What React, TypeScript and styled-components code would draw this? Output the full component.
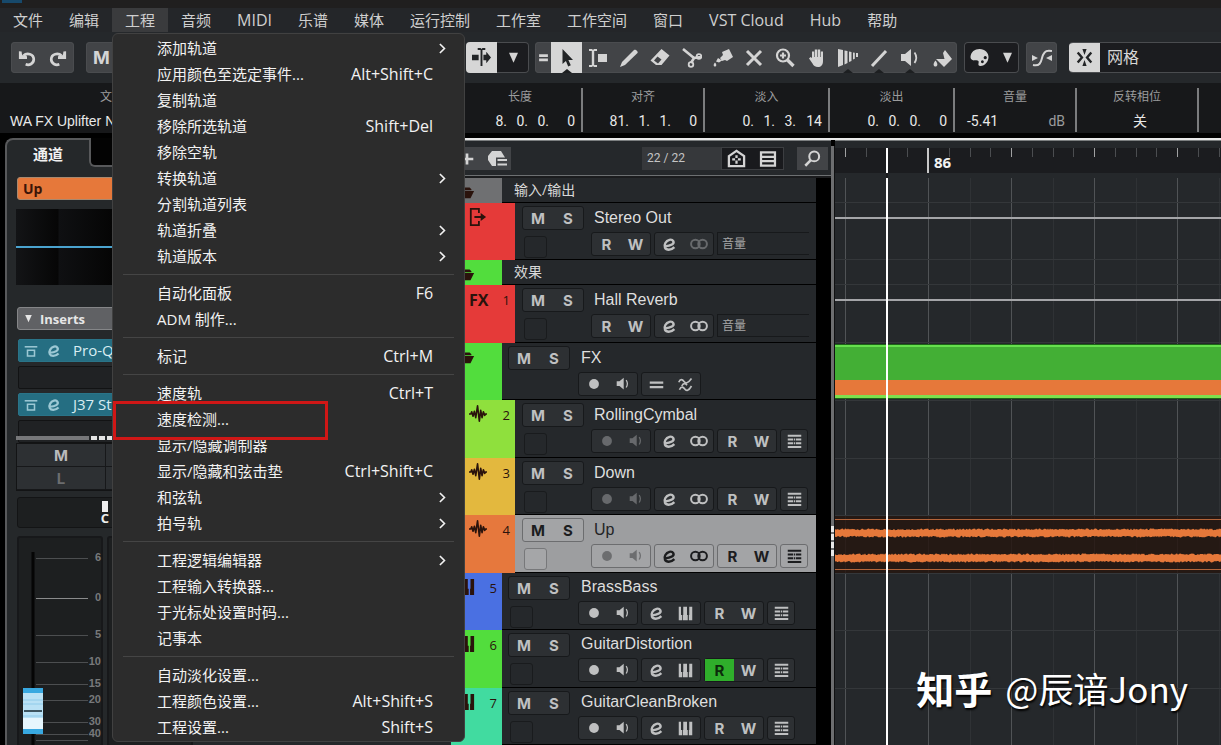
import React from 'react';
import styled, { createGlobalStyle, css } from 'styled-components';

const ui = `"Open Sans", "Noto Sans CJK SC", sans-serif`;
const plain = `"Liberation Sans", "Noto Sans CJK SC", sans-serif`;
const digits = `Roboto, "Noto Sans CJK SC", sans-serif`;

const Global = createGlobalStyle`
  *, *::before, *::after { box-sizing: border-box; }
  body { margin: 0; background: #000; color: #d6d6d6; font-family: ${ui}; overflow: hidden; }
  button { font: inherit; color: inherit; background: none; border: 0; padding: 0; margin: 0; }
  svg { display: block; flex: none; }
`;

/* ---------- icons ---------- */

const icons: Record<string, React.ReactNode> = {
  undo: <><path d="M6 7.500C10 3.500 17.500 5.500 17.500 11.500c0 5-5 7-9 5.500" fill="none" stroke="currentColor" strokeWidth="3" /><path d="M1 2.500l3 .3.500 4L10 8v3H1z" /></>,
  redo: <><path d="M14 7.500C10 3.500 2.500 5.500 2.500 11.500c0 5 5 7 9 5.500" fill="none" stroke="currentColor" strokeWidth="3" /><path d="M19 2.500l-3 .3-.500 4L10 8v3h9z" /></>,
  crosshair: <><path d="M0 7h7v6H0zM9 1h2v18H9zM6 0h3l1 1 1-1h3v2H6zM12 7h3V4l5 6-5 6v-3h-3z" /></>,
  down: <path d="M4 3.500h12L10 17z" />,
  equal: <path d="M2 4h16v5H2zM2 12h16v5H2z" />,
  bars: <path d="M1 6h18v3H1zM1 12h18v3H1z" />,
  cursor: <path d="M5.500 1v15l3.400-3 2.300 5.500 2.600-1.200-2.400-5.300h4.600z" />,
  range: <><path d="M1 1h3l1 1 1-1h3v2H6.200v14H9v2H6l-1-1-1 1H1v-2h2.800V3H1zM10 6h9v8h-9z" /></>,
  pencil: <path d="M1 19l2-5L15 2c1.500-1 4.500 1.500 3.500 3L6 17z" />,
  eraser: <path fillRule="evenodd" d="M11.500 1l8 6.500-8 9.500H6L.500 12.500zM7.500 8.500L4 12.500l4 3 3.500-4z" />,
  scissors: <><path d="M1 1l11 9M19 9l-7 1-3 5" fill="none" stroke="currentColor" strokeWidth="2.600" /><circle cx="17" cy="8.500" r="2.300" fill="none" stroke="currentColor" strokeWidth="1.800" /><circle cx="9" cy="16.500" r="2.300" fill="none" stroke="currentColor" strokeWidth="1.800" /></>,
  glue: <path d="M9 4l7-3 4 8-6 4-2-1-3 1-2-3 3-3zM5 10l4 2.500-3 2-3-1zM2 14.500c2 2 1.500 4 0 4s-2-2 0-4z" />,
  cross: <path d="M3 3l14 14M17 3L3 17" fill="none" stroke="currentColor" strokeWidth="3" />,
  zoom: <><circle cx="8" cy="7.500" r="6" fill="none" stroke="currentColor" strokeWidth="2.200" /><path d="M8 4.500v6M5 7.500h6" stroke="currentColor" strokeWidth="2.200" /><path d="M12.500 12l6 6" stroke="currentColor" strokeWidth="3.400" /></>,
  hand: <path d="M5 10V3.500h2.200V9h.6V1.500h2.400V9h.6V1.500h2.400V9h.6V3.500H16V13c0 4-2 6-5 6s-4.500-1.500-5.500-3.500L2 10.500l1.500-1.500z" />,
  comp: <path d="M0 1l5 1v15l-5 2zM6.500 2.500l3 .5v12l-3 1.500zM11 3.500l2.500.5v9l-2.500 1zM15 4.500l1.800.3v6l-1.800.7zM18 5h2v4h-2z" />,
  line: <path d="M3 18L17 3" stroke="currentColor" strokeWidth="3" />,
  speaker: <><path d="M1 6h4l6-5v17l-6-5H1z" /><path d="M14.500 4.500q3.500 5 0 10.500" fill="none" stroke="currentColor" strokeWidth="1.800" /></>,
  paint: <path d="M13 2l7 9-8 8-8-8h8.500l-1.500-6zM3.500 12.500c3 3.500 2 6 0 6s-3-2.500 0-6z" />,
  palette: <path fillRule="evenodd" d="M10 1c6 0 9.500 4 9.500 8.500S16 19 11 19c-2 0-2.500-1.500-2-3 .8-3-1-3.500-4-3C2 13.500.500 11.500.500 9.500 1 4 5 1 10 1zM16 8.500a1.700 1.700 0 1 0 .1 0zM13 13a1.500 1.500 0 1 0 .1 0z" />,
  curve: <><path d="M1 17c9 2 8-6 10-10s4-5 9-4" fill="none" stroke="currentColor" strokeWidth="2" /><path d="M0 7l6 3-6 3zM20 7l-6 3 6 3z" /></>,
  snap: <><path d="M7.500 0h5L10 7zM7.500 20h5L10 13z" /><path d="M2 4l5 6-5 6M18 4l-5 6 5 6" fill="none" stroke="currentColor" strokeWidth="2.800" /></>,
  plus: <path d="M8.500 4h3v4.500H17v3h-5.500V16h-3v-4.500H3v-3h5.500z" />,
  preset: <><path d="M5 2h9l4 6.500H9V17H5L1 11V7z" /><path d="M10.500 11H20M10.500 15.500H20" stroke="currentColor" strokeWidth="2.200" /></>,
  agents: <><path d="M2 7.500L10 2l8 5.500V18H2z" fill="none" stroke="currentColor" strokeWidth="2.400" /><path d="M10 6.500v3M10 12v3.500M5.500 11h3M11.500 11h3" stroke="currentColor" strokeWidth="2.400" /></>,
  list: <path fillRule="evenodd" d="M1 1.500h18v17H1zM3.500 4v2.500h13V4zM3.500 8.800v2.400h13V8.800zM3.500 13.500V16h13v-2.500z" />,
  search: <><circle cx="12" cy="7.500" r="5.800" fill="none" stroke="currentColor" strokeWidth="2.400" /><path d="M8 12l-6.500 6.500" stroke="currentColor" strokeWidth="3" /></>,
  folder: <path d="M1 5h13l2 2v1H1zM3 9h16l-4 8H1z" />,
  output: <><path d="M11 5.500V1H2v18h9v-4.500" fill="none" stroke="currentColor" strokeWidth="2" /><path d="M6 9h7V5.500l6 4.500-6 4.500V11H6z" /></>,
  wave: <path d="M0 10h2l1-2.500 1.500 5L6 7l1.500 7L9.500 1l2 17L13 6l1.500 8L16 7.500l1.500 4 1-1.500H20" fill="none" stroke="currentColor" strokeWidth="1.800" strokeLinejoin="round" />,
  keys: <path d="M1 1h3v11h1.500v7H1zM7 12V1h5v11h1v7H6.500v-7zM15 1h4v18h-4.500v-7H15z" />,
  rec: <circle cx="10" cy="10" r="7" />,
  edit: <path d="M4 12.500C12 12 17 9 15 5.500 13 2 7 3.500 4.500 8s-.5 9 4.500 9c3 0 5.500-1.500 7.500-3.500" fill="none" stroke="currentColor" strokeWidth="3.200" />,
  stereo: <><circle cx="6" cy="10" r="4.800" fill="none" stroke="currentColor" strokeWidth="2.200" /><circle cx="14" cy="10" r="4.800" fill="none" stroke="currentColor" strokeWidth="2.200" /></>,
  lanes: <path d="M1 1h18v2.500H1zM1 6h7v2.500H1zM12 6h7v2.500h-7zM1 11h7v2.500H1zM12 11h7v2.500h-7zM1 16h18v2.500H1zM9 6h2v2.500H9zM9 11h2v2.500H9z" />,
  swing: <path d="M1 7c2-5 5-4 7-1s5 3 10-4M2 17c2-5 5-4 7-1s5 3 9-4M5 12c2-4 5-4 7-1" fill="none" stroke="currentColor" strokeWidth="2.200" />,
  bypass: <><path d="M1 4h18" stroke="currentColor" strokeWidth="2.200" /><path d="M5 9h10v8H5z" fill="none" stroke="currentColor" strokeWidth="2.200" /></>,
  chevron: <path d="M6 3l7 7-7 7" fill="none" stroke="currentColor" strokeWidth="2.500" />,
};

const Icon = ({ name, size = 18 }: { name: string; size?: number }) => (
  <svg width={size} height={size} viewBox="0 0 20 20" fill="currentColor" aria-hidden="true">{icons[name]}</svg>
);

/* ---------- frame ---------- */

const Frame = styled.div`
  display: flex;
  flex-direction: column;
  height: 100vh;
  background: #000;
`;
const TitleBar = styled.header`
  height: 8px;
  padding-left: 2px;
  background: #201f1f;
`;
const AppMark = styled.div`
  width: 20px;
  height: 3px;
  background: #17496b;
`;

/* ---------- main menu ---------- */

const MenuBar = styled.nav`
  position: relative;
  z-index: 5;
  display: flex;
  height: 24px;
  background: #242629;
`;
const MenuSlot = styled.div`position: relative;`;
const MenuTitle = styled.button<{ $open?: boolean; $latin?: boolean }>`
  height: 24px;
  padding: 0 13px;
  font-size: ${p => (p.$latin ? 16 : 15)}px;
  line-height: 24px;
  white-space: nowrap;
  color: #cfcfcf;
  background: ${p => (p.$open ? '#3a3b3d' : 'transparent')};
`;
const Dropdown = styled.div`
  position: absolute;
  top: 25px;
  left: 0;
  width: 353px;
  padding: 1px 0;
  background: #2c2c2c;
  border: 1px solid #414141;
  border-radius: 6px;
`;
const DropItem = styled.button<{ $marked?: boolean }>`
  display: flex;
  align-items: center;
  width: 100%;
  height: 26px;
  padding: 0 15px 0 44px;
  font-size: 15px;
  line-height: 26px;
  color: #f2f2f2;
  text-align: left;
  white-space: nowrap;
  ${p => p.$marked && css`
    position: relative;
    &::after {
      content: '';
      position: absolute;
      z-index: 1;
      top: -5px;
      left: 0;
      width: 215px;
      height: 39px;
      border: 3px solid #d01716;
    }
  `}
`;
const DropLabel = styled.span`flex: 1;`;
const Shortcut = styled.span`
  padding-right: 16px;
  font-size: 16px;
`;
const DropRule = styled.hr`
  height: 1px;
  margin: 5px 10px;
  border: 0;
  background: #454545;
`;

type Entry = [string, string?];
const projectMenu: Entry[][] = [
  [['添加轨道', '>'], ['应用颜色至选定事件...', 'Alt+Shift+C'], ['复制轨道'], ['移除所选轨道', 'Shift+Del'], ['移除空轨'], ['转换轨道', '>'], ['分割轨道列表'], ['轨道折叠', '>'], ['轨道版本', '>']],
  [['自动化面板', 'F6'], ['ADM 制作...']],
  [['标记', 'Ctrl+M']],
  [['速度轨', 'Ctrl+T'], ['速度检测...'], ['显示/隐藏调制器'], ['显示/隐藏和弦击垫', 'Ctrl+Shift+C'], ['和弦轨', '>'], ['拍号轨', '>']],
  [['工程逻辑编辑器', '>'], ['工程输入转换器...'], ['于光标处设置时码...'], ['记事本']],
  [['自动淡化设置...'], ['工程颜色设置...', 'Alt+Shift+S'], ['工程设置...', 'Shift+S']],
];
const menuTitles = ['文件', '编辑', '工程', '音频', 'MIDI', '乐谱', '媒体', '运行控制', '工作室', '工作空间', '窗口', 'VST Cloud', 'Hub', '帮助'];

const ProjectMenu = () => (
  <Dropdown role="menu">
    {projectMenu.map((group, g) => (
      <React.Fragment key={g}>
        {g > 0 && <DropRule />}
        {group.map(([label, extra]) => (
          <DropItem key={label} role="menuitem" $marked={label === '速度检测...'}>
            <DropLabel>{label}</DropLabel>
            {extra === '>' ? <Icon name="chevron" size={13} /> : extra && <Shortcut>{extra}</Shortcut>}
          </DropItem>
        ))}
      </React.Fragment>
    ))}
  </Dropdown>
);

/* ---------- toolbar ---------- */

const Toolbar = styled.div`
  display: flex;
  align-items: center;
  height: 51px;
  padding-left: 11px;
  background: #25282b;
`;
const ToolGroup = styled.div<{ $dark?: boolean; $w?: number; $after: number }>`
  display: flex;
  flex: none;
  width: ${p => (p.$w ? p.$w + 'px' : 'auto')};
  height: 31px;
  margin-right: ${p => p.$after}px;
  border-radius: 4px;
  overflow: hidden;
  background: ${p => (p.$dark ? '#1b1c1f' : '#424447')};
  box-shadow: inset 0 0 0 1px #4a4c4f;
`;
const ToolButton = styled.button<{ $on?: boolean; $w?: number; $notch?: boolean }>`
  position: relative;
  display: flex;
  align-items: center;
  justify-content: center;
  flex: none;
  width: ${p => p.$w ?? 31}px;
  height: 31px;
  font: bold 18px Inter, sans-serif;
  color: ${p => (p.$on ? '#222426' : '#d4d4d4')};
  background: ${p => (p.$on ? '#d6d6d6' : 'transparent')};
  ${p => p.$notch && css`
    &::after {
      content: '';
      position: absolute;
      bottom: 0;
      left: 11px;
      border: 5px solid transparent;
      border-top-width: 0;
      border-bottom: 4px solid #1d1f21;
    }
  `}
`;
const SnapField = styled.div`
  display: flex;
  align-items: center;
  flex: 1;
  height: 31px;
  border: 1px solid #4a4c4f;
  border-width: 1px 0;
  border-radius: 4px 0 0 4px;
  overflow: hidden;
  background: #1b1c1f;
`;
const SnapType = styled.button`
  flex: 1;
  padding-left: 7px;
  font-size: 16px;
  line-height: 29px;
  text-align: left;
`;
const tools: [string, boolean?][] = [['cursor', true], ['range'], ['pencil'], ['eraser'], ['scissors'], ['glue'], ['cross'], ['zoom'], ['hand'], ['comp', true], ['line', true], ['speaker', true], ['paint']];

/* ---------- info line ---------- */

const InfoLine = styled.div`
  display: flex;
  height: 50px;
  background: #17181a;
`;
const InfoCell = styled.div<{ $w: number; $bar?: boolean }>`
  display: flex;
  flex-direction: column;
  flex: none;
  width: ${p => p.$w}px;
  height: 44px;
  margin-top: 5px;
  border-right: ${p => (p.$bar ? '2px solid #7b7c7e' : '0')};
`;
const InfoLabel = styled.div`
  font-size: 12px;
  line-height: 18px;
  text-align: center;
  color: #9b9c9d;
`;
const InfoValue = styled.div<{ $align?: string }>`
  display: flex;
  justify-content: ${p => p.$align ?? 'flex-end'};
  padding: 3px 6px 0 12px;
  font: 14px/24px ${digits};
  color: #e9e9e9;
`;
const FileName = styled(InfoValue)`
  justify-content: flex-start;
  padding-left: 10px;
  font-family: ${plain};
`;
const Unit = styled.span`color: #9b9c9d; padding-right: 4px;`;
const Part = styled.span`
  width: 21px;
  text-align: right;
  &:last-child { width: 26px; }
`;

const Position = ({ parts }: { parts: string[] }) => (
  <InfoValue>{parts.map((p, i) => <Part key={i}>{p}</Part>)}</InfoValue>
);

/* ---------- workspace ---------- */

const Workspace = styled.main`
  display: flex;
  flex: 1;
  min-height: 0;
`;
const Inspector = styled.aside`
  display: flex;
  flex-direction: column;
  flex: none;
  width: 451px;
  padding: 5px 0 0 5px;
  overflow: hidden;
`;
const TabRow = styled.div`display: flex; flex: none; height: 29px;`;
const Tab = styled.button`
  width: 84px;
  border: solid #58595b;
  border-width: 2px 0 0 2px;
  border-top-left-radius: 8px;
  background: #25282a;
  font-size: 15px;
  font-weight: bold;
  color: #f0f0f0;
`;
const TabRest = styled.div`
  flex: 1;
  background: #25282a;
  &::before {
    content: '';
    display: block;
    height: 29px;
    border: solid #58595b;
    border-width: 0 0 2px 2px;
    border-bottom-left-radius: 6px;
    background: #030303;
  }
`;
const Channel = styled.div`
  display: flex;
  flex-direction: column;
  flex: 1;
  padding: 10px 0 0 9px;
  border-left: 2px solid #58595b;
  background: #25282a;
`;
const ChannelName = styled.div`
  flex: none;
  height: 23px;
  margin: 0 0 9px 1px;
  padding-left: 5px;
  border: 1px solid #a9896f;
  border-radius: 3px;
  background: #e6783a;
  font: bold 14px/21px ${ui};
  color: #3b1408;
`;
const EqView = styled.div`
  flex: none;
  height: 76px;
  background:
    linear-gradient(#4aa3cf, #4aa3cf) 0 37px / 100% 2px no-repeat,
    linear-gradient(90deg, #131416 0, #060606 42px, #0f1012 43px, #050505 96px);
`;
const SectionHead = styled.button`
  display: flex;
  align-items: center;
  gap: 6px;
  flex: none;
  height: 23px;
  margin: 22px 0 9px 1px;
  padding-left: 5px;
  border: 1px solid #858688;
  border-radius: 3px;
  background: #606164;
  font: bold 13px ${ui};
  color: #e6e6e6;
`;
const Slot = styled.div<{ $used?: boolean }>`
  display: flex;
  align-items: center;
  flex: none;
  gap: 9px;
  height: 23px;
  margin: 0 0 4px 2px;
  padding-left: 5px;
  border-radius: 2px;
  border: 1px solid ${p => (p.$used ? '#2a7488' : '#121314')};
  background: ${p => (p.$used ? '#256e82' : '#202224')};
  font: 15px/21px ${ui};
  color: #9cc8d4;
`;
const SlotName = styled.span`padding-left: 3px; color: #d9edf2;`;
const Divider = styled.div`
  display: flex;
  flex: none;
  gap: 2px;
  height: 4px;
  margin-top: -11px;
  background: #25282a;
`;
const Grip = styled.i<{ $w: number; $h?: number; $c: string }>`
  flex: none;
  width: ${p => p.$w}px;
  height: ${p => p.$h ?? 4}px;
  background: ${p => p.$c};
`;
const MuteListen = styled.div`
  display: grid;
  grid-template-columns: 89px 89px;
  grid-auto-rows: 23px;
  flex: none;
  width: 180px;
  margin-top: 3px;
  border: 1px solid #131415;
  background: #2d3033;
`;
const Cell = styled.button<{ $dim?: boolean }>`
  border-right: 1px solid #17181a;
  border-bottom: 1px solid #17181a;
  font: bold 15px Inter, sans-serif;
  color: ${p => (p.$dim ? '#6b6d6f' : '#b9babb')};
`;
const Pan = styled.div`
  display: flex;
  flex-direction: column;
  align-items: center;
  flex: none;
  width: 176px;
  height: 31px;
  margin: 6px 0 8px 1px;
  padding-top: 3px;
  border: 1px solid #131415;
  border-radius: 3px;
  background: #1d1f20;
  font: bold 13px/12px ${ui};
  color: #eee;
`;
const Faders = styled.div`display: flex; flex: 1; gap: 4px; margin-left: 1px;`;
const FaderBox = styled.div`
  width: 86px;
  border: 2px solid #17181a;
  border-radius: 3px;
  background: #1d1f20;
`;

const marks: [string, number][] = [['6', 20], ['0', 60], ['5', 97], ['10', 124], ['15', 146], ['20', 162], ['30', 184], ['40', 196]];
const Fader = () => (
  <svg width="83" height="207" viewBox="0 0 83 207">
    <path d="M14 14v193" stroke="#050505" strokeWidth="3" />
    {marks.map(([t, y]) => (
      <g key={t}>
        <path d={`M17 ${y}.5h52`} stroke={t === '0' ? '#8a8b8c' : '#4c4e50'} />
        <text x="82" y={y + 3} textAnchor="end" fontFamily="Liberation Sans" fontSize="11" fontWeight="bold" fill="#77797b">{t}</text>
      </g>
    ))}
    <path d="M17 202.500h52" stroke="#4c4e50" />
    <g transform="translate(0 -1)">
      <path d="M4 151h20v46H4z" fill="#b9e1f5" />
      <path d="M4 151h20v5H4zM4 192h20v5H4z" fill="#38a8e0" />
      <path d="M4 163h20M4 167h20M4 179h20" stroke="#8fcbea" />
      <path d="M4 181h20v11H4z" fill="#e6f6fd" />
      <path d="M5 174h18" stroke="#3d5560" strokeWidth="2" />
    </g>
  </svg>
);

/* ---------- track list ---------- */

const RightSide = styled.div`
  display: flex;
  flex: 1;
  min-width: 0;
  margin-top: 5px;
  border-top: 2px solid #e8e8e8;
`;
const TrackList = styled.section`
  display: flex;
  flex-direction: column;
  flex: none;
  width: 380px;
`;
const ListHeader = styled.div`
  display: flex;
  align-items: center;
  flex: none;
  height: 38px;
  padding-right: 3px;
  border-top: 1px solid #7c7f80;
  border-bottom: 2px solid #1b1c1e;
  background: linear-gradient(#6d7072, #6d7072) 0 34px / 100% 1px no-repeat, #25282b;
`;
const HeadGroup = styled.div<{ $dark?: boolean }>`
  display: flex;
  height: 23px;
  background: ${p => (p.$dark ? '#191a1d' : '#424447')};
  box-shadow: inset 0 0 0 1px ${p => (p.$dark ? '#3c3e41' : '#424447')};
`;
const HeadButton = styled.button<{ $w: number }>`
  display: flex;
  align-items: center;
  justify-content: center;
  width: ${p => p.$w}px;
  color: #d4d4d4;
`;
const Count = styled.div`
  width: 79px;
  height: 23px;
  margin-left: auto;
  padding-left: 5px;
  background: #36383b;
  font: 12px/23px ${digits};
  color: #c4c4c4;
`;
const Gap = styled.i`width: 13px;`;

const Rows = styled.div`
  flex: 1;
  min-height: 0;
  padding-right: 15px;
  overflow: hidden;
  background: #000;
`;
const rowHeight = css<{ $thin?: boolean }>`
  height: ${p => (p.$thin ? 25 : 57)}px;
  &:nth-child(2n + 4) { height: 58px; }
`;
const Row = styled.div<{ $thin?: boolean }>`
  display: flex;
  ${rowHeight}
`;
const Strip = styled.div<{ $c: string; $wide?: boolean }>`
  display: flex;
  align-items: flex-start;
  justify-content: space-between;
  flex: none;
  width: ${p => (p.$wide ? 64 : 51)}px;
  padding: 5px 5px 0 ${p => (p.$wide ? 18 : 6)}px;
  background: ${p => p.$c};
  font: 13px/20px ${ui};
  color: #2a130c;
`;
const FxMark = styled.b`font: bold 16px/20px ${ui};`;
const Body = styled.div<{ $sel?: boolean }>`
  display: flex;
  flex: 1;
  border-bottom: 1px solid #000;
  background: ${p => (p.$sel ? '#9d9ea0' : '#25282b')};
  color: ${p => (p.$sel ? '#1c1d1f' : '#bfc0c1')};
`;
const FolderTitle = styled.div`
  padding-left: 12px;
  font-size: 14px;
  line-height: 24px;
  color: #d9d9d9;
`;
const BodyLeft = styled.div<{ $wide?: boolean }>`
  flex: none;
  width: 76px;
  padding: 3px 0 0 ${p => (p.$wide ? 7 : 6)}px;
`;
const BodyRight = styled.div`flex: 1;`;
const TrackName = styled.div<{ $sel?: boolean; $tight?: boolean }>`
  height: ${p => (p.$tight ? 28 : 29)}px;
  padding-left: 3px;
  font: 16px/${p => (p.$tight ? 28 : 29)}px ${plain};
  color: ${p => (p.$sel ? '#232426' : '#dedede')};
`;
const ButtonRow = styled.div`display: flex; gap: 3px;`;
const Group = styled.div<{ $sel?: boolean; $w: number }>`
  display: flex;
  width: ${p => p.$w}px;
  height: 24px;
  border: 1px solid ${p => (p.$sel ? '#6c6d6f' : '#17191b')};
  border-radius: 3px;
  background: ${p => (p.$sel ? '#a3a4a6' : '#2d3033')};
`;
const Key = styled.button<{ $dim?: boolean; $lit?: boolean }>`
  display: flex;
  flex: 1;
  align-items: center;
  justify-content: center;
  font: bold 15px Inter, sans-serif;
  opacity: ${p => (p.$dim ? 0.4 : 1)};
  ${p => p.$lit && css`background: #2fae2b; color: #0c2b0b;`}
`;
const Picture = styled.div<{ $sel?: boolean }>`
  width: 23px;
  height: 22px;
  margin: 6px 0 0 2px;
  border: 1px solid ${p => (p.$sel ? '#77787a' : '#191b1d')};
  border-radius: 3px;
  background: ${p => (p.$sel ? '#a5a6a8' : 'transparent')};
`;
const Param = styled.button`
  flex: 1;
  height: 23px;
  margin-right: 7px;
  padding-left: 4px;
  border: solid #17191b;
  border-width: 1px 0 1px 1px;
  font-size: 12px;
  line-height: 20px;
  text-align: left;
  color: #a5a6a7;
`;

type Track = { name: string; color: string; icon: string; no?: string; thin?: boolean; wide?: boolean; kind?: string; sel?: boolean; lit?: boolean };
const tracks: Track[] = [
  { name: '输入/输出', color: '#6f7072', icon: 'folder', thin: true },
  { name: 'Stereo Out', color: '#e53a39', icon: 'output', wide: true, kind: 'out' },
  { name: '效果', color: '#52dd3d', icon: 'folder', thin: true },
  { name: 'Hall Reverb', color: '#e53a39', icon: 'fx', no: '1', wide: true, kind: 'fx' },
  { name: 'FX', color: '#52dd3d', icon: 'folder', kind: 'folder' },
  { name: 'RollingCymbal', color: '#8fe03d', icon: 'wave', no: '2', wide: true, kind: 'audio' },
  { name: 'Down', color: '#e3b83e', icon: 'wave', no: '3', wide: true, kind: 'audio' },
  { name: 'Up', color: '#e6783d', icon: 'wave', no: '4', wide: true, kind: 'audio', sel: true },
  { name: 'BrassBass', color: '#4a70e2', icon: 'keys', no: '5', kind: 'midi' },
  { name: 'GuitarDistortion', color: '#52dd3d', icon: 'keys', no: '6', kind: 'midi', lit: true },
  { name: 'GuitarCleanBroken', color: '#41dba0', icon: 'keys', no: '7', kind: 'midi' },
];

const Controls = ({ t }: { t: Track }) => {
  const auto = <Group $w={60} $sel={t.sel}><Key $lit={t.lit}>R</Key><Key>W</Key></Group>;
  if (t.kind === 'out' || t.kind === 'fx') {
    return (
      <ButtonRow>
        {auto}
        <Group $w={60}><Key><Icon name="edit" size={15} /></Key><Key $dim={t.kind === 'out'}><Icon name="stereo" /></Key></Group>
        <Param>音量</Param>
      </ButtonRow>
    );
  }
  const dim = t.kind === 'audio';
  return (
    <ButtonRow>
      <Group $w={60} $sel={t.sel}><Key $dim={dim}><Icon name="rec" size={14} /></Key><Key $dim={dim}><Icon name="speaker" size={14} /></Key></Group>
      {t.kind === 'folder'
        ? <Group $w={60}><Key><Icon name="bars" size={15} /></Key><Key><Icon name="swing" size={15} /></Key></Group>
        : (
          <>
            <Group $w={60} $sel={t.sel}><Key><Icon name="edit" size={15} /></Key><Key><Icon name={dim ? 'stereo' : 'keys'} size={dim ? 18 : 15} /></Key></Group>
            {auto}
            <Group $w={28} $sel={t.sel}><Key><Icon name="lanes" size={15} /></Key></Group>
          </>
        )}
    </ButtonRow>
  );
};

const TrackRow = ({ t }: { t: Track }) => (
  <Row $thin={t.thin}>
    <Strip $c={t.color} $wide={t.wide}>
      {t.icon === 'fx' ? <FxMark>FX</FxMark> : <Icon name={t.icon} />}
      {t.no}
    </Strip>
    <Body $sel={t.sel}>
      {t.thin ? <FolderTitle>{t.name}</FolderTitle> : (
        <>
          <BodyLeft $wide={t.wide}>
            <Group $w={62} $sel={t.sel}><Key>M</Key><Key>S</Key></Group>
            {t.kind !== 'folder' && <Picture $sel={t.sel} />}
          </BodyLeft>
          <BodyRight>
            <TrackName $sel={t.sel} $tight={t.kind === 'midi'}>{t.name}</TrackName>
            <Controls t={t} />
          </BodyRight>
        </>
      )}
    </Body>
  </Row>
);

/* ---------- timeline ---------- */

const Splitter = styled.div`
  display: flex;
  flex-direction: column;
  justify-content: center;
  gap: 2px;
  flex: none;
  width: 4px;
  margin-top: 6px;
  padding-top: 190px;
  border-right: 1px solid #101112;
  background: #6d6e70;
`;
const Timeline = styled.section`
  position: relative;
  display: flex;
  flex: 1;
  flex-direction: column;
  min-width: 0;
`;
const RulerArea = styled.div`
  flex: none;
  height: 38px;
  padding-top: 7px;
  border-top: 1px solid #7c7f80;
  background: #25282b;
`;
const Ruler = styled.div`
  height: 25px;
  padding-left: 92px;
  background:
    linear-gradient(#c8c8c8, #c8c8c8) 92px 0 / 2px 25px no-repeat,
    linear-gradient(90deg, #a0a1a2 1px, transparent 1px 21px, #4b4d50 21px 22px, transparent 22px 42px, #4b4d50 42px 43px, transparent 43px 62px, #4b4d50 62px 63px, transparent 63px) 10px 0 / 83px 9px repeat-x,
    #1b1c1f;
  font: bold 15px/29px ${ui};
  color: #f2f2f2;
`;
const Bar = styled.span`padding-left: 7px;`;
const Lanes = styled.div`
  flex: 1;
  min-height: 0;
  overflow: hidden;
  background:
    linear-gradient(90deg, #505356 1px, transparent 1px 42px, #2f3235 42px 43px, transparent 43px) 10px 0 / 83px 100% repeat-x,
    #25282b;
`;
const Lane = styled.div<{ $thin?: boolean; $line?: boolean }>`
  ${rowHeight}
  border-bottom: 1px solid #34373a;
  ${p => p.$line && css`background: linear-gradient(#a4a5a8, #a4a5a8) 0 14px / 100% 2px no-repeat;`}
`;
const FolderPart = styled.div`
  height: 55px;
  border: solid #1d6417;
  border-width: 1px 0;
  margin-top: 1px;
  background: linear-gradient(#66e04e 2px, #43af35 2px 35px, #e6783a 35px 50px, #7ee04e 50px);
`;
const AudioPart = styled.div`
  height: 57px;
  padding: 3px 0;
  background: rgba(38, 22, 16, 0.85);
`;
const AudioFrame = styled.div`
  height: 51px;
  border: solid #b3643a;
  border-width: 1px 0;
  overflow: hidden;
`;
const Playhead = styled.i`
  position: absolute;
  top: 8px;
  bottom: 0;
  left: 51px;
  width: 2px;
  background: linear-gradient(#fff 25px, #1b1c1f 25px 30px, #fff 30px);
`;
const Credit = styled.div`
  position: absolute;
  right: 33px;
  bottom: 31px;
  display: flex;
  align-items: center;
  gap: 13px;
  font: 35px/52px "Noto Sans CJK SC", sans-serif;
  white-space: nowrap;
  color: #fff;
  text-shadow: 1px 2px 2px #000;
`;
const Site = styled.strong`font-size: 38px; font-weight: 700;`;

const noise = (n: number) => {
  const v = Math.sin(n * 12.9898) * 43758.5453;
  return v - Math.floor(v);
};
const wave = (mid: number, seed: number) => {
  const w = 2400;
  let top = `M0 ${mid}`;
  let low = '';
  for (let x = 0; x <= w; x += 1) {
    top += `L${x} ${(mid - 2.8 - noise(x + seed) * 1.8).toFixed(1)}`;
    low = `L${x} ${(mid + 2.8 + noise(x * 3 + seed) * 1.8).toFixed(1)}` + low;
  }
  return top + low + 'Z';
};
const waves = wave(13, 3) + wave(38, 71);

export default function App() {
  return (
    <Frame>
      <Global />
      <TitleBar><AppMark /></TitleBar>
      <MenuBar>
        {menuTitles.map(m => (
          <MenuSlot key={m}>
            <MenuTitle $open={m === '工程'} $latin={/^[A-Z]/.test(m)}>{m}</MenuTitle>
            {m === '工程' && <ProjectMenu />}
          </MenuSlot>
        ))}
      </MenuBar>

      <Toolbar>
        <ToolGroup $after={12} $w={63}>
          <ToolButton aria-label="撤销"><Icon name="undo" size={18} /></ToolButton>
          <ToolButton aria-label="重做"><Icon name="redo" size={18} /></ToolButton>
        </ToolGroup>
        <ToolGroup $after={12} $w={368}><ToolButton>M</ToolButton></ToolGroup>
        <ToolGroup $dark $after={6}>
          <ToolButton $on aria-label="自动滚动"><Icon name="crosshair" size={19} /></ToolButton>
          <ToolButton $w={32} aria-label="选项"><Icon name="down" size={15} /></ToolButton>
        </ToolGroup>
        <ToolGroup $after={7}>
          <ToolButton $w={16} aria-label="工具"><Icon name="equal" size={11} /></ToolButton>
          {tools.map(([name, notch], i) => (
            <ToolButton key={name} $on={i === 0} $notch={notch} $w={i % 4 === 3 ? 32 : 31} aria-label={name}><Icon name={name} size={20} /></ToolButton>
          ))}
        </ToolGroup>
        <ToolGroup $dark $after={7}>
          <ToolButton aria-label="颜色"><Icon name="palette" size={19} /></ToolButton>
          <ToolButton $w={24} aria-label="颜色选项"><Icon name="down" size={15} /></ToolButton>
        </ToolGroup>
        <ToolGroup $after={12}><ToolButton aria-label="淡化"><Icon name="curve" size={20} /></ToolButton></ToolGroup>
        <SnapField>
          <ToolButton $on aria-label="吸附"><Icon name="snap" size={17} /></ToolButton>
          <SnapType>网格</SnapType>
        </SnapField>
      </Toolbar>

      <InfoLine>
        <InfoCell $w={224}><InfoLabel>文件</InfoLabel><FileName>WA FX Uplifter N</FileName></InfoCell>
        <InfoCell $w={235} />
        <InfoCell $w={124} $bar><InfoLabel>长度</InfoLabel><Position parts={['8.', '0.', '0.', '0']} /></InfoCell>
        <InfoCell $w={122} $bar><InfoLabel>对齐</InfoLabel><Position parts={['81.', '1.', '1.', '0']} /></InfoCell>
        <InfoCell $w={125} $bar><InfoLabel>淡入</InfoLabel><Position parts={['0.', '1.', '3.', '14']} /></InfoCell>
        <InfoCell $w={125} $bar><InfoLabel>淡出</InfoLabel><Position parts={['0.', '0.', '0.', '0']} /></InfoCell>
        <InfoCell $w={122} $bar><InfoLabel>音量</InfoLabel><InfoValue $align="space-between">-5.41<Unit>dB</Unit></InfoValue></InfoCell>
        <InfoCell $w={122} $bar><InfoLabel>反转相位</InfoLabel><InfoValue $align="center">关</InfoValue></InfoCell>
      </InfoLine>

      <Workspace>
        <Inspector>
          <TabRow><Tab>通道</Tab><TabRest /></TabRow>
          <Channel>
            <ChannelName>Up</ChannelName>
            <EqView />
            <SectionHead><Icon name="down" size={11} />Inserts</SectionHead>
            <Slot $used><Icon name="bypass" size={14} /><Icon name="edit" size={14} /><SlotName>Pro-Q</SlotName></Slot>
            <Slot />
            <Slot $used><Icon name="bypass" size={14} /><Icon name="edit" size={14} /><SlotName>J37 St</SlotName></Slot>
            <Slot />
            <Divider>
              <Grip $w={73} $c="#77787a" /><Grip $w={6} $c="#e4e4e4" /><Grip $w={6} $c="#e4e4e4" /><Grip $w={6} $c="#e4e4e4" /><Grip $w={73} $c="#77787a" />
            </Divider>
            <MuteListen><Cell>M</Cell><Cell /><Cell $dim>L</Cell><Cell /></MuteListen>
            <Pan><Grip $w={6} $h={11} $c="#eee" />C</Pan>
            <Faders><FaderBox><Fader /></FaderBox><FaderBox /></Faders>
          </Channel>
        </Inspector>

        <RightSide>
          <TrackList>
            <ListHeader>
              <HeadGroup>
                <HeadButton $w={31} aria-label="添加轨道"><Icon name="plus" /></HeadButton>
                <HeadButton $w={29} aria-label="轨道预设"><Icon name="preset" size={20} /></HeadButton>
              </HeadGroup>
              <Count>22 / 22</Count>
              <HeadGroup $dark>
                <HeadButton $w={31} aria-label="可见性"><Icon name="agents" size={19} /></HeadButton>
                <HeadButton $w={32} aria-label="列表"><Icon name="list" /></HeadButton>
              </HeadGroup>
              <Gap />
              <HeadGroup><HeadButton $w={31} aria-label="查找轨道"><Icon name="search" size={17} /></HeadButton></HeadGroup>
            </ListHeader>
            <Rows>{tracks.map(t => <TrackRow key={t.name} t={t} />)}</Rows>
          </TrackList>
          <Splitter>
            {[0, 1, 2, 3].map(i => <Grip key={i} $w={3} $h={6} $c="#e8e8e8" />)}
          </Splitter>
          <Timeline>
            <RulerArea><Ruler><Bar>86</Bar></Ruler></RulerArea>
            <Lanes>
              {tracks.map(t => (
                <Lane key={t.name} $thin={t.thin} $line={t.kind === 'out' || t.kind === 'fx'}>
                  {t.kind === 'folder' && <FolderPart />}
                  {t.sel && (
                    <AudioPart><AudioFrame>
                      <svg width="2400" height="51"><path d={waves} fill="#e6783a" /></svg>
                    </AudioFrame></AudioPart>
                  )}
                </Lane>
              ))}
            </Lanes>
            <Playhead />
            <Credit><Site>知乎</Site>@辰谙Jony</Credit>
          </Timeline>
        </RightSide>
      </Workspace>
    </Frame>
  );
}
